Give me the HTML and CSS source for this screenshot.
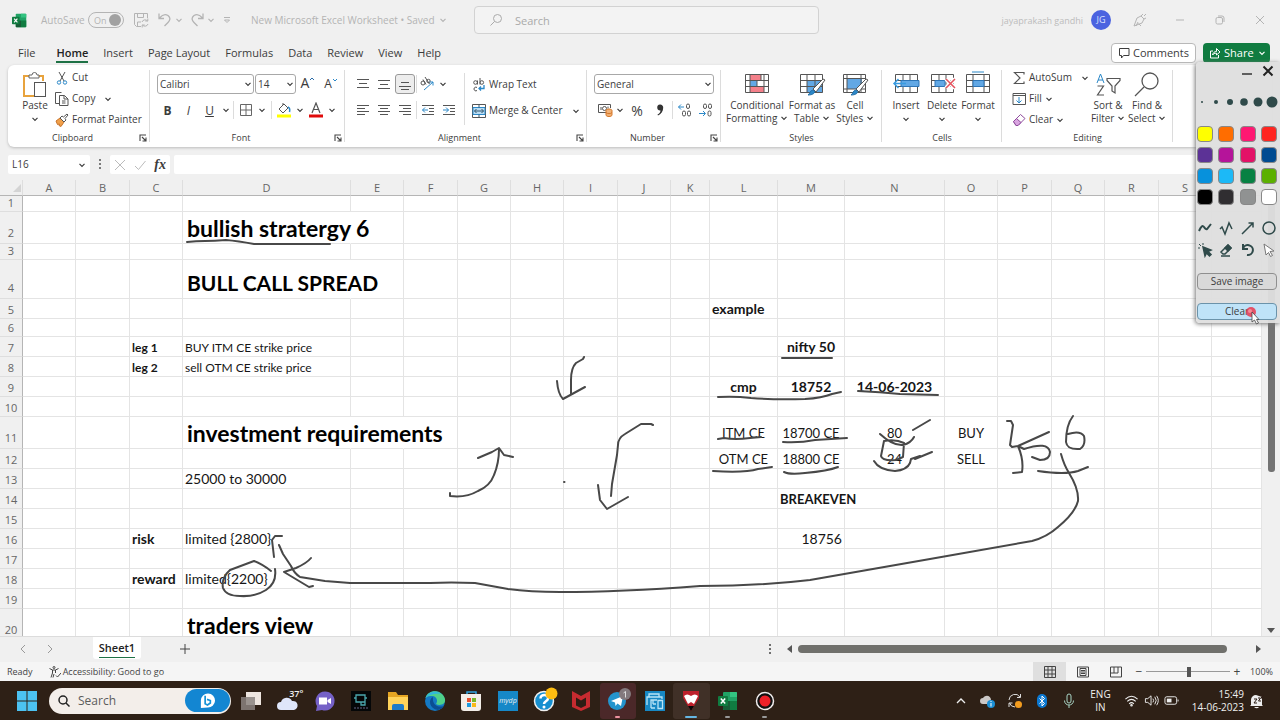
FILE: index.html
```html
<!DOCTYPE html>
<html lang="en">
<head>
<meta charset="utf-8">
<title>New Microsoft Excel Worksheet</title>
<link rel="stylesheet" href="styles.css">
</head>
<body>
<svg class="defs" aria-hidden="true">
  <symbol id="chev" viewBox="0 0 8 8"><path d="M1.5 2.8 4 5.3 6.500 2.800" fill="none" stroke="currentColor" stroke-width="1.2"/></symbol>
  <symbol id="launch" viewBox="0 0 8 8"><path d="M1 7V1h6M3 3l4 4M7 3.500V7H3.500" fill="none" stroke="#444" stroke-width="1.100"/></symbol>
  <symbol id="xl" viewBox="0 0 20 20"><rect x="5" y="1" width="14" height="18" rx="1" fill="#21a366"/><path d="M5 10h7v9H6a1 1 0 0 1-1-1z" fill="#185c37"/><path d="M12 10h7v8a1 1 0 0 1-1 1h-6z" fill="#107c41"/><path d="M12 1h6a1 1 0 0 1 1 1v4h-7z" fill="#33c481"/><rect x="0" y="5" width="10" height="10" rx="1" fill="#107c41"/><path d="m2.800 7.500 4.400 5M7.200 7.500l-4.400 5" stroke="#fff" stroke-width="1.500"/></symbol>
</svg>

<header class="titlebar">
  <div class="title-left">
    <svg class="i15" viewBox="0 0 20 20"><use href="#xl"/></svg>
    <span class="autosave">AutoSave</span>
    <button class="toggle" aria-label="AutoSave on"><span>On</span><i></i></button>
    <button class="ib save" aria-label="Save"><svg class="i16" viewBox="0 0 16 16" fill="none" stroke="currentColor"><path d="M8 14.500H3.500l-2-2v-11h13V6M4.500 1.500v4h6v-4M4.500 14v-4H8M9 10a3.200 3.200 0 0 1 5.500-1M14.800 6.500V9h-2.500M15 12a3.200 3.200 0 0 1-5.500 1M9.200 15.500V13h2.500"/></svg></button>
    <button class="ib undo" aria-label="Undo"><svg class="i16" viewBox="0 0 16 16" fill="none" stroke="currentColor" stroke-width="1.300"><path d="M2 1.500v5h5M2.500 6C5 3 8 1.500 11 3.500c3 2.500 2 5 0 7L7.500 14"/></svg></button>
    <svg class="i8 c1"><use href="#chev"/></svg>
    <button class="ib redo" aria-label="Redo"><svg class="i16" viewBox="0 0 16 16" fill="none" stroke="currentColor" stroke-width="1.300"><path d="M14 1.500v5H9M13.500 6C11 3 8 1.500 5 3.500c-3 2.500-2 5 0 7L8.500 14"/></svg></button>
    <svg class="i8 c1"><use href="#chev"/></svg>
    <svg class="i8 more" viewBox="0 0 8 8" fill="none" stroke="currentColor"><path d="M1 1.500h6M1.500 4 4 6.500 6.500 4z"/></svg>
    <span class="doc">New Microsoft Excel Worksheet • Saved</span>
    <svg class="i8"><use href="#chev"/></svg>
  </div>
  <label class="search"><svg class="i14" viewBox="0 0 14 14" fill="none" stroke="currentColor"><circle cx="8.500" cy="5.500" r="4"/><path d="m5.500 8.500-4 4"/></svg><input type="text" placeholder="Search" aria-label="Search"></label>
  <div class="title-right">
    <span class="user">jayaprakash gandhi</span><span class="avatar">JG</span>
    <button class="win" aria-label="Ink"><svg class="i14" viewBox="0 0 14 14" fill="none" stroke="currentColor"><path d="m1 13 3-8 4-2 3 3-2 4zM5 9l-2 4M8 3l2-2M11 6l2-1M11 3l2-2M5.500 10.500 8 13"/></svg></button>
    <button class="win" aria-label="Minimize"><svg class="i10" viewBox="0 0 10 10" stroke="currentColor"><path d="M1 5h8"/></svg></button>
    <button class="win" aria-label="Restore"><svg class="i10" viewBox="0 0 10 10" fill="none" stroke="currentColor"><rect x="1" y="2.500" width="6.500" height="6.500" rx="1.500"/><path d="M3 1h4a2 2 0 0 1 2 2v4"/></svg></button>
    <button class="win" aria-label="Close"><svg class="i10" viewBox="0 0 10 10" stroke="currentColor"><path d="m1 1 8 8M9 1 1 9"/></svg></button>
  </div>
</header>

<nav class="tabs">
  <button class="file">File</button><button class="on">Home</button><button>Insert</button><button>Page Layout</button><button>Formulas</button><button>Data</button><button>Review</button><button>View</button><button>Help</button>
  <span class="grow"></span>
  <button class="comments"><svg class="i12" viewBox="0 0 12 12" fill="none" stroke="currentColor"><path d="M1.500 1.500h9.500v7H5.500L3.500 11V8.500h-2z"/></svg>Comments</button>
  <button class="share"><svg class="i12" viewBox="0 0 12 12" fill="none" stroke="currentColor"><path d="M4 4H1.500v7h8V8M3.500 8C4 5.500 5.500 4.500 7.500 4.500v-3L11 5 7.500 8V6.200C5.500 6.200 4.500 6.700 3.500 8z"/></svg>Share<svg class="i8"><use href="#chev"/></svg></button>
</nav>

<main class="ribbon">
  <section class="group">
    <div class="body clip">
      <button class="big"><svg class="art" viewBox="0 0 28 27" fill="none"><path d="M9 4H3v20h10M17 4h5v5" stroke="#e8a33d" stroke-width="2"/><path d="M8 6V3h3a2.500 2.500 0 0 1 5 0h2v3z" fill="#fff" stroke="#666"/><rect x="13.500" y="10.500" width="11" height="14" fill="#fff" stroke="#555"/></svg><span>Paste</span><svg class="i8 low"><use href="#chev"/></svg></button>
      <div class="stack">
        <button class="line"><svg class="i14" viewBox="0 0 14 14" fill="none"><path d="m4 1 5 9M10 1l-5 9" stroke="#555"/><circle cx="4" cy="11.500" r="1.700" stroke="#2b88c8"/><circle cx="10" cy="11.500" r="1.700" stroke="#2b88c8"/></svg>Cut</button>
        <button class="line"><svg class="i14" viewBox="0 0 14 14" fill="#fff" stroke="#555"><path d="M4.500 11.500h-4v-11h6M4.500 3.500h5l3.500 3.500v6.500H4.500zM9 3.500V7h4M7 9h3.500M7 11h3.500"/></svg>Copy<svg class="i8 far"><use href="#chev"/></svg></button>
        <button class="line"><svg class="i14" viewBox="0 0 14 14" fill="none"><path d="M1 8l4-3 4 4-3 4.500-2-1 .5-1.500-2 .5z" fill="#f0a04a" stroke="#c8732a"/><path d="m5 5 2-2 1.500 1L12 1l1 1-3 3.500L11 7 9 9z" fill="#fff" stroke="#555"/></svg>Format Painter</button>
      </div>
    </div>
    <footer class="launch">Clipboard<svg class="i8"><use href="#launch"/></svg></footer>
  </section>

  <section class="group">
    <div class="body rows">
      <div class="frow1">
        <span class="sel"><select aria-label="Font"><option>Calibri</option></select><svg class="i8"><use href="#chev"/></svg></span>
        <span class="sel"><select aria-label="Font size"><option>14</option></select><svg class="i8"><use href="#chev"/></svg></span>
        <button class="ib big-a" aria-label="Grow font">A<svg class="i6" viewBox="0 0 6 6" fill="none" stroke="#2b6ca8"><path d="m1 4 2-2 2 2"/></svg></button>
        <button class="ib small-a" aria-label="Shrink font">A<svg class="i6" viewBox="0 0 6 6" fill="none" stroke="#2b88c8"><path d="m1 2 2 2 2-2"/></svg></button>
      </div>
      <div class="frow2">
        <button class="ib"><b>B</b></button><button class="ib"><em>I</em></button><button class="ib"><u>U</u></button><svg class="i8"><use href="#chev"/></svg><hr>
        <button class="ib" aria-label="Borders"><svg class="i14" viewBox="0 0 14 14" fill="none" stroke="#666"><path d="M1.500 1.500h11v11h-11zM7 1.500v11M1.500 7h11"/></svg></button><svg class="i8"><use href="#chev"/></svg><hr>
        <button class="ib" aria-label="Fill colour"><svg class="i16" viewBox="0 0 16 16" fill="none"><path d="m3 7 5-5 4 4-5 5zM7 3V1" stroke="#555"/><path d="M12 5c2 1 2 3 1.500 5" stroke="#2b88c8" stroke-width="1.500"/><path d="M1 12.500h14v3H1z" fill="#ff0"/></svg></button><svg class="i8"><use href="#chev"/></svg>
        <button class="ib" aria-label="Font colour"><svg class="i16" viewBox="0 0 16 16" fill="none"><path d="m4 11 4-10 4 10M5.500 7.500h5" stroke="#555" stroke-width="1.200"/><path d="M1 12.500h14v3H1z" fill="#e00b0b"/></svg></button><svg class="i8"><use href="#chev"/></svg>
      </div>
    </div>
    <footer class="launch">Font<svg class="i8"><use href="#launch"/></svg></footer>
  </section>

  <section class="group">
    <div class="body split">
      <div class="rows">
        <div class="arow">
          <button class="ib" aria-label="Top align"><svg class="i14" viewBox="0 0 14 14" stroke="#555"><path d="M1 2.500h12M3 6.500h8M1 10.500h12"/></svg></button>
          <button class="ib" aria-label="Middle align"><svg class="i14" viewBox="0 0 14 14" stroke="#555"><path d="M1 3.500h12M3 7.500h8M1 11.500h12"/></svg></button>
          <button class="ib pressed" aria-label="Bottom align"><svg class="i14" viewBox="0 0 14 14" stroke="#555"><path d="M3 5.500h8M1 9.500h12M3 12.500h8"/></svg></button><hr>
          <button class="ib" aria-label="Orientation"><svg class="i16" viewBox="0 0 16 16" fill="none"><circle cx="4" cy="7" r="2" stroke="#555"/><path d="m4 3.500 3 5M6 1l4.500 7" stroke="#555"/><circle cx="9.500" cy="5" r="1.700" stroke="#555"/><path d="m5 14 9-8M10.500 6H14v3.500" stroke="#2b88c8"/></svg></button><svg class="i8"><use href="#chev"/></svg>
        </div>
        <div class="arow two">
          <button class="ib" aria-label="Align left"><svg class="i14" viewBox="0 0 14 14" stroke="#555"><path d="M1 2.500h12M1 5.500h8M1 8.500h12M1 11.500h8"/></svg></button>
          <button class="ib" aria-label="Centre"><svg class="i14" viewBox="0 0 14 14" stroke="#555"><path d="M1 2.500h12M3 5.500h8M1 8.500h12M3 11.500h8"/></svg></button>
          <button class="ib" aria-label="Align right"><svg class="i14" viewBox="0 0 14 14" stroke="#555"><path d="M1 2.500h12M5 5.500h8M1 8.500h12M5 11.500h8"/></svg></button><hr>
          <button class="ib" aria-label="Decrease indent"><svg class="i14" viewBox="0 0 14 14" fill="none" stroke="#555"><path d="M1 2.500h12M8 5.500h5M8 8.500h5M1 11.500h12"/><path d="M7 7H1.500M4 4.500 1.500 7 4 9.500" stroke="#2b88c8"/></svg></button>
          <button class="ib" aria-label="Increase indent"><svg class="i14" viewBox="0 0 14 14" fill="none" stroke="#555"><path d="M1 2.500h12M8 5.500h5M8 8.500h5M1 11.500h12"/><path d="M1 7h5.500M4 4.500 6.500 7 4 9.500" stroke="#2b88c8"/></svg></button>
        </div>
      </div>
      <hr class="tall">
      <div class="wrapcol">
        <button class="line"><svg class="i14" viewBox="0 0 14 14" fill="none" stroke="#555"><circle cx="3.500" cy="4.500" r="1.800"/><path d="M5.500 2.500v4M8 0v6.500M5 9.500c-1.500-1-3 0-3 1.500s1.500 2.500 3 1.500"/><circle cx="9.800" cy="4.500" r="1.800"/><path d="M12 7v3.500H7M9 8.500l-2 2 2 2" stroke="#2b88c8" stroke-width="1.300"/></svg>Wrap Text</button>
        <button class="line"><svg class="i14" viewBox="0 0 14 14" fill="none" stroke="#555"><path d="M.500.500h13v13H.500z"/><path d="M1 3.500h12v7H1z" fill="#b9dcf3" stroke="#2b88c8"/><path d="M7 .5v3M7 10.500v3M2.500 7h9M4.500 5l-2 2 2 2M9.500 5l2 2-2 2" stroke="#35566d"/></svg>Merge &amp; Center<svg class="i8 far"><use href="#chev"/></svg></button>
      </div>
    </div>
    <footer class="launch">Alignment<svg class="i8"><use href="#launch"/></svg></footer>
  </section>

  <section class="group">
    <div class="body rows">
      <span class="sel"><select aria-label="Number format"><option>General</option></select><svg class="i8"><use href="#chev"/></svg></span>
      <div class="nrow">
        <button class="ib" aria-label="Accounting"><svg class="i16" viewBox="0 0 16 16" fill="none" stroke="#555"><path d="M9 10.500H1.500v-8h12V6M4 5v3M11 4.500v2"/><circle cx="7.500" cy="6.500" r="2"/><path d="M9 8.500c0-2 6-2 6 0V13c0 2-6 2-6 0z" fill="#f2b176" stroke="#d5782a"/><path d="M9 10.500c1 1.500 5 1.500 6 0" stroke="#d5782a"/></svg></button><svg class="i8"><use href="#chev"/></svg>
        <button class="ib pct">%</button><button class="ib" aria-label="Comma style"><svg class="i14" viewBox="0 0 14 14"><path d="M7 1.500a3 3 0 0 1 3.200 3.300C10.200 8.500 8 11 5 12.500l-.5-1C6.500 10.500 7.500 9 7.500 7.500A3 3 0 1 1 7 1.500z" fill="#333"/></svg></button><hr>
        <button class="ib" aria-label="Increase decimal"><svg class="i14" viewBox="0 0 14 14" fill="none" stroke="#555"><rect x="9.500" y="1" width="3" height="4.500" rx="1.500"/><rect x="5.500" y="8" width="3" height="5" rx="1.500"/><rect x="10.500" y="8" width="3" height="5" rx="1.500"/><path d="M7 4H1.500M4 1.500 1.500 4 4 6.500" stroke="#2b88c8"/></svg></button>
        <button class="ib" aria-label="Decrease decimal"><svg class="i14" viewBox="0 0 14 14" fill="none" stroke="#555"><rect x="5.500" y="1" width="3" height="4.500" rx="1.500"/><rect x="10.500" y="1" width="3" height="4.500" rx="1.500"/><rect x="10" y="8" width="3" height="5" rx="1.500"/><path d="M1 10.500h6M5 8l2.500 2.500L5 13" stroke="#2b88c8"/></svg></button>
      </div>
    </div>
    <footer class="launch">Number<svg class="i8"><use href="#launch"/></svg></footer>
  </section>

  <section class="group">
    <div class="body styles">
      <button class="big"><svg class="art" viewBox="0 0 28 27"><path d="M2.500 2.500h23v18h-23z" fill="#fff"/><path d="M7 2.500h11v6H7zM7 14.500h14v6H7z" fill="#f4808a"/><path d="M7 8.500h7v6H7z" fill="#62a8e5"/><path d="M2.500 2.500h23v18h-23zM2.500 8.500h23M2.500 14.500h23M7 2.500v18M21 2.500v18M18 2.500v6M14 8.500v6" fill="none" stroke="#555"/></svg><span>Conditional<br>Formatting <svg class="i8"><use href="#chev"/></svg></span></button>
      <button class="big"><svg class="art" viewBox="0 0 28 27"><path d="M9 8.500h16v12H9z" fill="#62a8e5"/><path d="M2.500 2.500h22v18h-22zM2.500 8.500h22M2.500 14.500h22M9 2.500v18M17 2.500v18" fill="none" stroke="#555"/><path d="m15 17 10-10 2 1-9 12z" fill="#fff" stroke="#555"/><path d="M10 23c2-1 2-5 5-5 3 1 2 5-5 5z" fill="#2b88c8" stroke="#2470a8"/></svg><span>Format as<br>Table <svg class="i8"><use href="#chev"/></svg></span></button>
      <button class="big"><svg class="art" viewBox="0 0 28 27"><path d="M6 6h15v11H6z" fill="#62a8e5"/><path d="M2.500 2.500h22v18h-22zM2.500 6.500h22M2.500 17h22M6 2.500v18M20 2.500v18" fill="none" stroke="#555"/><path d="m15 17 10-10 2 1-9 12z" fill="#fff" stroke="#555"/><path d="M10 23c2-1 2-5 5-5 3 1 2 5-5 5z" fill="#2b88c8" stroke="#2470a8"/></svg><span>Cell<br>Styles <svg class="i8"><use href="#chev"/></svg></span></button>
    </div>
    <footer>Styles</footer>
  </section>

  <section class="group">
    <div class="body cells">
      <button class="big"><svg class="art" viewBox="0 0 28 27" fill="none"><path d="M3.500 2.500h22v18h-22zM3.500 8.500h22M3.500 14.500h22M11 2.500v18M18 2.500v18" stroke="#555"/><path d="M9 8.500h18v6H9z" fill="#62a8e5" stroke="#2e75b6"/><path d="M14 11.500H2M6.500 7 2 11.500 6.500 16" stroke="#3a9be0" stroke-width="1.500"/></svg><span>Insert</span><svg class="i8 low"><use href="#chev"/></svg></button>
      <button class="big"><svg class="art" viewBox="0 0 28 27" fill="none"><path d="M3.500 2.500h22v18h-22zM3.500 8.500h22M3.500 14.500h22M11 2.500v18M18 2.500v18" stroke="#555"/><path d="M7 8.500h10v6H7z" fill="#62a8e5" stroke="#2e75b6"/><path d="m18 7 9 9M27 7l-9 9" stroke="#fff" stroke-width="4"/><path d="m18 7 9 9M27 7l-9 9" stroke="#e4515c" stroke-width="1.500"/></svg><span>Delete</span><svg class="i8 low"><use href="#chev"/></svg></button>
      <button class="big"><svg class="art" viewBox="0 0 28 27" fill="none"><path d="M2.500 2.500h23v18h-23zM2.500 8.500h23M2.500 14.500h23M9 2.500v18M20 2.500v18" stroke="#555"/><path d="M9 8.500h11v6H9z" fill="#62a8e5" stroke="#2e75b6"/><path d="M8 0h12" stroke="#2b88c8"/></svg><span>Format</span><svg class="i8 low"><use href="#chev"/></svg></button>
    </div>
    <footer>Cells</footer>
  </section>

  <section class="group">
    <div class="body edit">
      <div class="stack">
        <button class="line"><svg class="i14" viewBox="0 0 14 14" fill="none" stroke="#555" stroke-width="1.200"><path d="M12 3.500v-2H2.500L8 7l-5.500 5.500H12v-2"/></svg>AutoSum<svg class="i8 far"><use href="#chev"/></svg></button>
        <button class="line"><svg class="i14" viewBox="0 0 14 14" fill="none" stroke="#555"><path d="M1 1.500h12.500v11H1zM1 3.500h12.500"/><path d="M7 5v6M4.500 8.500 7 11l2.500-2.500" stroke="#2b88c8"/></svg>Fill<svg class="i8"><use href="#chev"/></svg></button>
        <button class="line"><svg class="i14" viewBox="0 0 14 14" fill="none" stroke="#8e4b9c"><path d="m1.500 8.500 7-7 4.500 4-7 7H4z"/><path d="m1.500 8.500 3-3L9 9.500l-3 3H4z" fill="#d9a5e0"/></svg>Clear<svg class="i8"><use href="#chev"/></svg></button>
      </div>
      <button class="big"><svg class="art" viewBox="0 0 28 27" fill="none"><path d="m3 11 3.500-9L10 11M4 8h5" stroke="#2b88c8"/><path d="M3.500 14h6l-6 9h6.500M13 6.500h13v2L21 14v7l-3-2v-5l-5-5.500z" stroke="#555" stroke-width="1.200"/></svg><span>Sort &amp;<br>Filter <svg class="i8"><use href="#chev"/></svg></span></button>
      <button class="big"><svg class="art" viewBox="0 0 28 27" fill="none" stroke="#555" stroke-width="1.300"><circle cx="17" cy="9" r="8"/><path d="M11 15 2 24"/></svg><span>Find &amp;<br>Select <svg class="i8"><use href="#chev"/></svg></span></button>
    </div>
    <footer>Editing</footer>
  </section>
</main>

<div class="formula">
  <label class="namebox"><input type="text" value="L16" aria-label="Name box"><svg class="i8"><use href="#chev"/></svg></label>
  <svg class="dots" viewBox="0 0 4 12" fill="#555"><circle cx="2" cy="2" r="1"/><circle cx="2" cy="6" r="1"/><circle cx="2" cy="10" r="1"/></svg>
  <div class="fx"><svg class="i12" viewBox="0 0 12 12" stroke="#bbb"><path d="m1 1 10 10M11 1 1 11"/></svg><svg class="i12" viewBox="0 0 12 12" fill="none" stroke="#bbb"><path d="m1 7 3.500 3.500L11.500 2"/></svg><em>fx</em></div>
  <input class="finput" type="text" aria-label="Formula bar">
</div>

<div class="sheet">
  <table>
    <colgroup><col class="w23"><col class="w53"><col class="w54"><col class="w53"><col class="w168"><col class="w53"><col class="w54"><col class="w53"><col class="w53"><col class="w54"><col class="w53"><col class="w39"><col class="w68"><col class="w67"><col class="w100"><col class="w53"><col class="w54"><col class="w53"><col class="w54"><col class="w53"><col></colgroup>
    <thead><tr><th class="corner"><svg class="i10" viewBox="0 0 10 10"><path d="M9 1v8H1z" fill="#d4d4d4"/></svg></th><th>A</th><th>B</th><th>C</th><th>D</th><th>E</th><th>F</th><th>G</th><th>H</th><th>I</th><th>J</th><th>K</th><th>L</th><th>M</th><th>N</th><th>O</th><th>P</th><th>Q</th><th>R</th><th>S</th><th></th></tr></thead>
    <tbody>
    <tr class="h16"><th>1<td><td><td><td><td><td><td><td><td><td><td><td><td><td><td><td><td><td><td><td>
    <tr class="h32"><th>2<td><td><td><td class="h spill">bullish stratergy 6<td><td><td><td><td><td><td><td><td><td><td><td><td><td><td><td>
    <tr class="h16"><th>3<td><td><td><td><td><td><td><td><td><td><td><td><td><td><td><td><td><td><td><td>
    <tr class="h39"><th>4<td><td><td><td class="h caps spill">BULL CALL SPREAD<td><td><td><td><td><td><td><td><td><td><td><td><td><td><td><td>
    <tr class="h20"><th>5<td><td><td><td><td><td><td><td><td><td><td><td class="b">example<td><td><td><td><td><td><td><td>
    <tr class="h18"><th>6<td><td><td><td><td><td><td><td><td><td><td><td><td><td><td><td><td><td><td><td>
    <tr class="h20"><th>7<td><td><td class="b sm">leg 1<td class="sm">BUY ITM CE strike price<td><td><td><td><td><td><td><td><td class="b c">nifty 50<td><td><td><td><td><td><td>
    <tr class="h20"><th>8<td><td><td class="b sm">leg 2<td class="sm">sell OTM CE strike price<td><td><td><td><td><td><td><td><td><td><td><td><td><td><td><td>
    <tr class="h20"><th>9<td><td><td><td><td><td><td><td><td><td><td><td class="b c">cmp<td class="b c">18752<td class="b c">14-06-2023<td><td><td><td><td><td>
    <tr class="h20"><th>10<td><td><td><td><td><td><td><td><td><td><td><td><td><td><td><td><td><td><td><td>
    <tr class="h32"><th>11<td><td><td><td class="h spill">investment requirements<td class="spill"><td><td><td><td><td><td><td class="c m">ITM CE<td class="c m">18700 CE<td class="c m">80<td class="c m">BUY<td><td><td><td><td>
    <tr class="h20"><th>12<td><td><td><td><td><td><td><td><td><td><td><td class="c t">OTM CE<td class="c t">18800 CE<td class="c t">24<td class="c t">SELL<td><td><td><td><td>
    <tr class="h20"><th>13<td><td><td><td>25000 to 30000<td><td><td><td><td><td><td><td><td><td><td><td><td><td><td><td>
    <tr class="h20"><th>14<td><td><td><td><td><td><td><td><td><td><td><td><td class="b t spill">BREAKEVEN<td><td><td><td><td><td><td>
    <tr class="h20"><th>15<td><td><td><td><td><td><td><td><td><td><td><td><td><td><td><td><td><td><td><td>
    <tr class="h20"><th>16<td><td><td class="b">risk<td>limited {2800}<td><td><td><td><td><td><td><td><td class="r">18756<td><td><td><td><td><td><td>
    <tr class="h20"><th>17<td><td><td><td><td><td><td><td><td><td><td><td><td><td><td><td><td><td><td><td>
    <tr class="h20"><th>18<td><td><td class="b">reward<td>limited{2200}<td><td><td><td><td><td><td><td><td><td><td><td><td><td><td><td>
    <tr class="h20"><th>19<td><td><td><td><td><td><td><td><td><td><td><td><td><td><td><td><td><td><td><td>
    <tr class="h32"><th>20<td><td><td><td class="h">traders view<td><td><td><td><td><td><td><td><td><td><td><td><td><td><td><td>
    </tbody>
  </table>
  <div class="vscroll"><i></i><svg class="i8" viewBox="0 0 8 8"><path d="M0 2h8L4 7z" fill="#555"/></svg></div>
</div>

<div class="sheetbar">
  <svg class="i10 nav" viewBox="0 0 10 10" fill="none" stroke="#999"><path d="M7 1 3 5l4 4"/></svg>
  <svg class="i10 nav" viewBox="0 0 10 10" fill="none" stroke="#999"><path d="m3 1 4 4-4 4"/></svg>
  <button class="sheettab"><span>Sheet1</span></button>
  <button class="ib plus" aria-label="New sheet"><svg class="i10" viewBox="0 0 10 10" stroke="#444"><path d="M5 0v10M0 5h10"/></svg></button>
  <span class="grow"></span>
  <div class="hscroll"><svg class="dots" viewBox="0 0 4 12" fill="#444"><circle cx="2" cy="2" r="1"/><circle cx="2" cy="6" r="1"/><circle cx="2" cy="10" r="1"/></svg><svg class="i8" viewBox="0 0 8 8"><path d="M6 0v8L1 4z" fill="#555"/></svg><i></i><svg class="i8" viewBox="0 0 8 8"><path d="M2 0v8l5-4z" fill="#555"/></svg></div>
</div>

<div class="status">
  <span>Ready</span>
  <svg class="i12 acc" viewBox="0 0 12 12" fill="none" stroke="#444"><circle cx="5" cy="1.500" r="1"/><path d="M.5 2.500 3.500 4v3L2 11.500M9.500 2.500 6.500 4v3M3.500 4h3M5 8l-1 3.500M7 9.500l1.500 1.500L12 7"/></svg>
  <span>Accessibility: Good to go</span><span class="grow"></span>
  <button class="view on" aria-label="Normal"><svg class="i12" viewBox="0 0 12 12" fill="none" stroke="#444"><path d="M.5.5h11v11H.500zM.5 4h11M.5 8h11M4 .5v11M8 .5v11"/></svg></button>
  <button class="view" aria-label="Page layout"><svg class="i12" viewBox="0 0 12 12" fill="none" stroke="#444"><path d="M.5 1h11v10H.500zM3 2.500h6v7H3zM4 4.500h4M4 6h4M4 7.500h4"/></svg></button>
  <button class="view" aria-label="Page break"><svg class="i12" viewBox="0 0 12 12" fill="none" stroke="#444"><path d="M.5 1h11v10H.500zM4 1v6M8 1v6M.5 7h7.500"/></svg></button>
  <span class="zm">−</span><input class="zoom" type="range" aria-label="Zoom" min="10" max="190" value="102"><span class="zm">+</span><span class="pc">100%</span>
</div>

<footer class="taskbar">
  <button class="ib start" aria-label="Start"><svg viewBox="0 0 20 20" fill="#4cc2f1"><path d="M0 0h9.500v9.500H0zM10.500 0H20v9.500h-9.500zM0 10.500h9.500V20H0zM10.500 10.500H20V20h-9.500z"/></svg></button>
  <label class="tsearch"><svg class="i12" viewBox="0 0 12 12" fill="none" stroke="#222" stroke-width="1.500"><circle cx="5" cy="5" r="4"/><path d="m8 8 3.500 3.500"/></svg><input type="text" placeholder="Search" aria-label="Taskbar search"><span class="bing"><svg viewBox="0 0 18 18"><path d="M2 17V9a7.500 7.500 0 1 1 7 7.500z" fill="#fff"/><path d="M6.500 4v8.500l2.500 1.200 3-2V9L8.500 7.800" fill="none" stroke="#1593d8" stroke-width="1.800"/></svg></span></label>
  <div class="apps">
    <span><svg viewBox="0 0 24 24"><path d="M7 3h15v13H7z" fill="#eee6e0"/><path d="M2 8h14v13H2z" fill="#8b8480" opacity=".85"/></svg></span>
    <span class="weather"><svg viewBox="0 0 24 24"><path d="M5 21a4 4 0 0 1 0-8 6 6 0 0 1 11-1 4.500 4.500 0 0 1 2 9z" fill="#dfe6fa"/></svg><small>37°</small></span>
    <span><svg viewBox="0 0 24 24"><path d="M12 2.500a9.500 9.500 0 1 1-3 18.500L3 22l1-5A9.500 9.500 0 0 1 12 2.500z" fill="#7561c7"/><path d="M6 8.500h8v7H6zM14.500 11l3.500-2v6l-3.500-2z" fill="#fff"/></svg></span>
    <span><svg viewBox="0 0 24 24"><path d="M2 2h20v20H2z" fill="#050708"/><path d="M7 6h9v7H7zM12 13v3h4v-3M5 9h2M16 9h2" fill="none" stroke="#4ba7ad" stroke-width="1.300"/><path d="M5 19h14" stroke="#668" stroke-dasharray="2 1"/></svg></span>
    <span><svg viewBox="0 0 24 24"><path d="M2 3h8l2 3h10v15H2z" fill="#e5a523"/><path d="M2 8h20v13H2z" fill="#ffd35a"/><path d="M6 21v-4q0-2 2-2h8q2 0 2 2v4z" fill="#1d7bc9"/></svg></span>
    <span><svg viewBox="0 0 24 24"><circle cx="12" cy="12" r="10" fill="#1479c4"/><path d="M2.500 9C5 0 19 0 22 10c1 6-6 7-9 5 2-3 1-7-3-8-3 0-6 0-7.500 2z" fill="#4fd08a"/><path d="M2.500 9C5 2 14 1 18 5 11 4 6 6 2.500 9z" fill="#31b7dd"/><path d="M10 8c-5 2-4 12 5 13 3-1 5-2 6-4-6 2-12-1-11-9z" fill="#0b4e93"/></svg></span>
    <span><svg viewBox="0 0 24 24"><path d="M8 6V3h9v3" fill="none" stroke="#31a3df" stroke-width="1.500"/><path d="M2 5h20v14q0 3-3 3H5q-3 0-3-3z" fill="#f3eee8"/><path d="M8 9h4v4H8z" fill="#e8502f"/><path d="M13 9h4v4h-4z" fill="#77b82b"/><path d="M8 14h4v4H8z" fill="#1d9be0"/><path d="M13 14h4v4h-4z" fill="#f9b917"/></svg></span>
    <span class="mydp"><b>my<i>dp</i></b></span>
    <span><svg viewBox="0 0 24 24"><circle cx="11" cy="12" r="9.500" fill="#168fd0" stroke="#f0f0f0" stroke-width="1.500"/><path d="M7.500 9.500c0-5 8-4.500 7.500 0-.5 3-4 2.500-4 5.500" fill="none" stroke="#fff" stroke-width="2.500"/><circle cx="11" cy="18" r="1.500" fill="#fff"/><circle cx="18.500" cy="4.500" r="6" fill="#fdbc11"/></svg></span>
    <span><svg viewBox="0 0 24 24"><path d="m3 2 9 5 9-5v16l-9 4-9-4z" fill="#c62b30"/><path d="m7 8.500 5 3 5-3v8L12 19l-5-2.500z" fill="#2c1d14"/></svg></span>
    <span class="run tg"><svg viewBox="0 0 24 24"><circle cx="11" cy="12" r="9" fill="#2494cd"/><path d="m5 12 12-5-2 10-3.500-2.500L9.500 17 9 13.500z" fill="#fff"/><circle cx="19" cy="5" r="6" fill="#83797d"/><path d="m17.500 4 2-1.500v6" fill="none" stroke="#ddd"/></svg></span>
    <span><svg viewBox="0 0 24 24"><path d="M2 2h20v20H2z" fill="#1788c3"/><path d="M6 8V5h10v3M4 16V8h15v2M8 19V11h6M8 19h4M15 11.500h4.500v8H15zM10 15h3M10 11v4" fill="none" stroke="#b8e3f6" stroke-width="1.300"/></svg></span>
    <span class="run act"><svg viewBox="0 0 24 24"><path d="M4 2h16v7l-8 13L4 9z" fill="#bd202b"/><path d="M5 7q3-3 7 0 4-3 7 0l-4 8-3-2-3 2z" fill="#fff"/><path d="m9 17 3 5 3-5z" fill="#080808"/></svg></span>
    <span class="run"><svg viewBox="0 0 20 20" class="i20"><use href="#xl"/></svg></span>
    <span class="run"><svg viewBox="0 0 24 24"><circle cx="12" cy="12" r="8.500" fill="#111" stroke="#f2eeee" stroke-width="1.500"/><circle cx="12" cy="12" r="5.500" fill="#ed2028"/></svg></span>
  </div>
  <span class="grow"></span>
  <div class="tray">
    <svg viewBox="0 0 16 16" fill="none" stroke="#eee" stroke-width="1.300"><path d="m4 10 4-4 4 4"/></svg>
    <svg viewBox="0 0 16 16"><path d="M3 11a3 3 0 0 1 0-6c3-4 8-2 8 2l1 4z" fill="#cbc8c7"/><circle cx="11" cy="11" r="4" fill="#1b8fd5"/><path d="M11 10v3.500M11 8v1" stroke="#fff"/></svg>
    <svg viewBox="0 0 16 16" fill="none" stroke="#ddd"><path d="M2 7a6 6 0 0 1 11-3M13.500 1v3.500H10M8 14a6 6 0 0 1-5.500-4M2 14v-4h3.500"/><circle cx="11.500" cy="11.500" r="3.500" fill="#f39c1f" stroke="none"/></svg>
    <svg viewBox="0 0 16 16"><rect x="3" y="1" width="10" height="14" rx="5" fill="#0b78d1"/><path d="m5.500 5.500 5 5L8 13V3l2.500 2.500-5 5" fill="none" stroke="#fff"/></svg>
    <svg viewBox="0 0 16 16" fill="none" stroke="#a9d5c5"><rect x="6" y="1" width="4" height="9" rx="2"/><path d="M3.500 7.500c0 6 9 6 9 0M8 12v3"/></svg>
  </div>
  <span class="lang">ENG<br>IN</span>
  <div class="tray2">
    <svg viewBox="0 0 16 16" fill="none" stroke="#eee" stroke-width="1.200"><path d="M1.500 6.500q6.500-6 13 0M3.500 9q4.500-4.500 9 0M5.500 11.500q2.500-2.500 5 0"/><circle cx="8" cy="13" r=".8"/></svg>
    <svg viewBox="0 0 16 16" fill="none" stroke="#eee"><path d="M1.500 6H4l3.500-3v10L4 10H1.500zM9.500 6q1.500 2 0 4M11.500 4q3 4 0 8M13.500 3q3.500 5 0 10"/></svg>
    <svg viewBox="0 0 16 16" fill="none" stroke="#eee"><rect x="1" y="4" width="12.500" height="8" rx="2"/><path d="M15 7v2"/><path d="M3 6h5v4H3z" fill="#eee" stroke="none"/></svg>
  </div>
  <span class="clock">15:49<br>14-06-2023</span>
  <svg class="bell" viewBox="0 0 16 16"><path d="M2 12V7a5 5 0 0 1 5-5l6 2v8l1 1H1zM5 14h5q-2 2.500-5 0z" fill="#eee"/><path d="M5 6h3L5 10h3M9 5h2.500L9.500 8H12M12 2h3l-3 3h3" fill="none" stroke="#2c1d14"/></svg>
</footer>

<svg class="ink" viewBox="0 0 1280 720" aria-hidden="true">
  <path d="M187 242Q196 241 205 241T226 240Q238 241 254 244H330M782 358H832M718 397Q735 396 751 398 775 400 805 399 822 398 832 394L841 392M858 391Q880 392 900 394L938 395"/>
  <path d="M718 439 724 438Q735 440 750 438L761 437M783 442Q800 443 815 440L847 438M913 430 930 420M880 434Q893 446 903 445 911 443 914 437M884 441 881 456Q882 461 896 460L903 457 904 443Q896 439 884 441M874 461Q879 470 895 471 907 470 910 463L911 459 920 456 915 459 932 452M713 471Q745 473 758 469L772 467M784 472Q790 475 805 473 828 471 838 467"/>
  <path d="M1007 421H1011L1013 425 1010 445 1012 447 1018 446 1049 432M1018 446Q1024 460 1022 472L1013 473M1018 446 1024 449Q1048 441 1050 452 1050 460 1040 460L1032 457M1073 416Q1066 425 1066 442 1067 450 1080 449 1086 445 1084 436 1080 430 1068 434M1038 471Q1065 475 1078 471L1088 467"/>
  <path d="M1061 454Q1064 465 1069 473 1079 489 1078 501 1075 513 1058 527 1047 537 1032 541L930 559 810 580Q760 586 700 586 620 592 560 592 530 592 508 589L475 583Q450 582 430 583L350 583 325 581 300 577Q294 573 291 566L283 554 279 545M311 558Q307 563 296 568L284 572 299 581 309 587 313 586M274 557 272 540 275 536H282M271 571Q262 564 254 561L230 570Q221 578 223 588 226 596 240 596 255 597 266 590 277 583 275 569"/>
  <path d="M450 493V496Q466 498 478 491 490 486 494 475 499 463 499 449M478 458 492 452 499 448 504 455 513 457M584 357 583 359 576 363Q571 368 571 380V394M557 381Q558 394 563 399L585 387M653 425 651 424H641L625 434Q618 438 618 445L617 455 612 484 611 496M598 485 600 500 607 509 628 497M564 482h.5"/>
</svg>

<aside class="palette">
  <div class="pwin"><button class="ib" aria-label="Minimize palette"><svg class="i12" viewBox="0 0 12 12" stroke="#333" stroke-width="1.500"><path d="M1 9h10"/></svg></button><button class="ib" aria-label="Close palette"><svg class="i12" viewBox="0 0 12 12" stroke="#222" stroke-width="2"><path d="m1.500 1.500 9 9M10.500 1.500l-9 9"/></svg></button></div>
  <svg class="sizes" viewBox="0 0 84 12" fill="#2f4a4a"><circle cx="6" cy="6" r="1"/><circle cx="20" cy="6" r="2"/><circle cx="34" cy="6" r="3"/><circle cx="48" cy="6" r="3.800"/><circle cx="62" cy="6" r="4.500"/><circle cx="76" cy="6" r="5.500"/></svg>
  <div class="swatches"><button class="s1" aria-label="Yellow"></button><button class="s2" aria-label="Orange"></button><button class="s3" aria-label="Pink"></button><button class="s4" aria-label="Red"></button><button class="s5" aria-label="Violet"></button><button class="s6" aria-label="Magenta"></button><button class="s7" aria-label="Crimson"></button><button class="s8" aria-label="Navy"></button><button class="s9" aria-label="Blue"></button><button class="s10" aria-label="Sky"></button><button class="s11" aria-label="Green"></button><button class="s12" aria-label="Lime"></button><button class="s13" aria-label="Black"></button><button class="s14" aria-label="Charcoal"></button><button class="s15" aria-label="Grey"></button><button class="s16" aria-label="White"></button></div>
  <div class="tools">
    <svg viewBox="0 0 16 16"><path d="M2 11q3-7 5-4t3 2l4-5" stroke-width="2"/></svg>
    <svg viewBox="0 0 16 16"><path d="m2 9 2-2 3 7 4-11 3 6"/></svg>
    <svg viewBox="0 0 16 16"><path d="M2 14 13 3M8.500 3H13v4.500"/></svg>
    <svg viewBox="0 0 16 16"><circle cx="8" cy="8" r="6"/></svg>
    <svg viewBox="0 0 16 16"><path d="m6 5 8 3-3 1.500 3 3-1.500 1.500-3-3L8 14z" fill="#2f4a4a"/><path d="m2 2 2 2M1 6h2M6 1v2" stroke-width="1"/></svg>
    <svg viewBox="0 0 16 16"><path d="m4 9 6-6 3 3-6 6H5L3 10zM3 14h9"/><path d="m7 6 3-3 3 3-3 3z" fill="#2f4a4a"/></svg>
    <svg viewBox="0 0 16 16"><path d="M3 7a5 5 0 1 1 4 6M3 2v5h5" stroke-width="2"/></svg>
    <svg viewBox="0 0 16 16"><path d="m3 2 10 7-4 .5 2.500 4L9.500 14.500 7.500 10.500 5 13z" fill="#fff" stroke="#777" stroke-width="1"/></svg>
  </div>
  <button class="pbtn">Save image</button>
  <button class="pbtn hot">Clear</button>
  <svg class="cursor" viewBox="0 0 16 20"><circle cx="6" cy="6" r="5" fill="#e9384f" opacity=".85"/><circle cx="5" cy="5" r="2" fill="#f58b95"/><path d="M7 6v10l2.500-2 2 4 2-1-2-3.500H14z" fill="#fff" stroke="#444" stroke-width=".8"/></svg>
</aside>
</body>
</html>
```

FILE: styles.css
```css
* { box-sizing: border-box; }
body {
  margin: 0;
  height: 100vh;
  display: flex;
  flex-direction: column;
  position: relative;
  overflow: hidden;
  background: #f0f0f0;
  color: #3c3c3c;
  font: 11px/13px "Open Sans", "Noto Sans", sans-serif;
}
button, input, select { font: inherit; color: inherit; margin: 0; padding: 0; border: 0; background: none; }
input { min-width: 0; outline: 0; }
svg { flex: none; display: block; }
hr { width: 1px; height: 18px; margin: 0; border: 0; background: #dcdcdc; }
.defs { position: absolute; width: 0; height: 0; }
.grow { flex: 1; }
.i6 { width: 6px; height: 6px; }
.i8 { width: 8px; height: 8px; }
.i10 { width: 10px; height: 10px; }
.i12 { width: 12px; height: 12px; }
.i14 { width: 14px; height: 14px; }
.i15 { width: 15px; height: 15px; }
.i16 { width: 16px; height: 16px; }
.ib { display: flex; align-items: center; justify-content: center; }

/* Title bar */
.titlebar { flex: none; height: 40px; display: grid; grid-template-columns: 474fr 345fr 461fr; align-items: center; color: #b4b4b4; }
.title-left { display: flex; align-items: center; padding-left: 12px; white-space: nowrap; font-size: 10px; }
.autosave { margin-left: 14px; width: 47px; }
.toggle { width: 36px; height: 16px; border: 1px solid #b4b4b4; border-radius: 8px; display: flex; align-items: center; justify-content: space-between; padding: 0 2px 0 5px; font-size: 9px; }
.toggle i { width: 12px; height: 12px; border-radius: 6px; background: #a2a2a2; }
.save { margin-left: 9px; }
.undo { margin-left: 8px; }
.redo { margin-left: 6px; }
.c1 { margin-left: 2px; }
.more { margin-left: 8px; }
.doc { margin: 0 4px 0 20px; }
.search { display: flex; align-items: center; gap: 12px; height: 28px; padding-left: 14px; border: 1px solid #d2d2d2; border-radius: 4px; background: #f3f3f3; color: #aaa; }
.search input::placeholder { color: #aaa; opacity: 1; }
.title-right { display: flex; align-items: center; justify-content: flex-end; font-size: 9px; }
.user { margin-right: 8px; color: #bcbcbc; }
.avatar { width: 20px; height: 20px; margin-right: 9px; border-radius: 50%; background: #4b63e0; color: #dfe4ff; text-align: center; line-height: 20px; }
.win { width: 40px; height: 24px; display: flex; align-items: center; justify-content: center; }

/* Ribbon tabs */
.tabs { flex: none; height: 25px; display: flex; align-items: center; gap: 15px; padding: 0 10px 0 18px; white-space: nowrap; }
.tabs > button { height: 20px; }
.tabs .file { margin-right: 6px; }
.tabs .on { font-weight: 600; color: #222; border-bottom: 2px solid #1e7145; padding-top: 2px; }
.tabs > .comments { display: flex; align-items: center; gap: 3px; padding: 0 6px; border: 1px solid #b8b8b8; border-radius: 4px; background: #fff; margin-right: -8px; }
.tabs > .share { display: flex; align-items: center; gap: 3px; width: 67px; padding: 0 4px 0 6px; border-radius: 4px; background: #107c41; color: #fff; }
.share .i8 { margin-left: auto; }

/* Ribbon */
.ribbon { flex: none; height: 82px; display: grid; grid-template-columns: 142px 195px 242px 134px 161px 120px 171px; margin: 0 8px; border-radius: 6px; background: #fff; box-shadow: 0 1px 3px #bbb; white-space: nowrap; overflow: hidden; }
.group { display: flex; flex-direction: column; position: relative; }
.group::after { content: ""; position: absolute; top: 5px; bottom: 5px; right: 0; width: 1px; background: #dcdcdc; }
.group footer { height: 16px; display: flex; justify-content: center; position: relative; font-size: 9px; }
.group .launch { padding-right: 13px; }
.group footer .i8 { position: absolute; right: 3px; top: 3px; }
.body { flex: 1; }
.rows { display: flex; flex-direction: column; gap: 6px; padding: 9px 7px 0; }
.clip { display: flex; padding: 0 0 0 13px; }
.stack { display: flex; flex-direction: column; padding-top: 2px; }
.clip .stack { padding-left: 6px; }
.line { height: 21px; display: flex; align-items: center; gap: 3px; font-size: 10px; }
.line .far { margin-left: 6px; }
.big { display: flex; flex-direction: column; align-items: center; padding-top: 7px; font-size: 10px; text-align: center; }
.clip .big { width: 28px; }
.big span .i8 { display: inline-block; }
.art { width: 28px; height: 27px; overflow: visible; }
.low { margin-top: 3px; }
.sel { display: grid; align-items: center; height: 20px; border: 1px solid #a8a8a8; border-radius: 3px; }
.sel > * { grid-area: 1 / 1; }
.sel select { width: 100%; appearance: none; font-size: 10px; padding-left: 2px; outline: 0; }
.sel svg { justify-self: end; margin-right: 1px; pointer-events: none; }
.frow1 { display: grid; grid-template-columns: 97px 41px 22px 22px; column-gap: 1px; height: 20px; }
.frow2, .arow, .nrow { display: grid; align-items: center; justify-items: center; height: 20px; }
.frow2 { grid-template-columns: 21px 21px 21px 11px 5px 20px 12px 6px 20px 12px 20px 12px; font-size: 12px; }
.big-a { font-size: 14px; align-items: flex-start; padding-top: 2px; }
.small-a { font-size: 12px; align-items: flex-start; padding-top: 3px; }
.split { display: flex; }
.split .rows { padding-right: 0; width: 119px; }
.arow { grid-template-columns: 21px 21px 21px 2px 20px 11px; }
.two { grid-template-columns: 21px 21px 21px 2px 21px 22px; }
.pressed { width: 20px; height: 20px; border: 1px solid #999; border-radius: 3px; background: #ededed; }
.tall { height: 52px; margin-top: 8px; }
.wrapcol { display: flex; flex-direction: column; gap: 5px; padding: 9px 0 0 7px; }
.nrow { grid-template-columns: 22px 8px 26px 20px 4px 20px 22px; }
.pct { font-size: 14px; }
.styles { display: grid; grid-template-columns: 66px 44px 42px; padding-left: 3px; }
.cells { display: grid; grid-template-columns: 36px 36px 36px; padding-left: 6px; }
.edit { display: grid; grid-template-columns: 75px 42px 36px; padding-left: 10px; }

/* Formula bar */
.formula { flex: none; height: 33px; display: flex; align-items: flex-start; padding: 8px 8px 0; }
.namebox, .fx, .finput { height: 19px; background: #fff; border-radius: 2px; }
.namebox { width: 82px; display: flex; align-items: center; padding: 0 4px; }
.namebox input { flex: 1; font-size: 10px; }
.dots { width: 4px; height: 12px; margin: 3px 8px; }
.fx { width: 60px; margin-right: 4px; display: flex; align-items: center; justify-content: space-around; }
.fx em { font: italic 700 14px/16px "Liberation Serif", serif; }
.finput { flex: 1; }

/* Worksheet */
.sheet { flex: 1; min-height: 0; display: grid; grid-template-columns: minmax(0, 1fr) 18px; overflow: hidden; }
.sheet table { width: 100%; align-self: start; table-layout: fixed; border-collapse: separate; border-spacing: 0; background: #fff; font: 14px/18px Lato, sans-serif; color: #161616; white-space: nowrap; }
.sheet th { padding: 0; background: #f0f0f0; color: #666; font: 11px/14px "Open Sans", sans-serif; }
.sheet thead th { height: 16px; border-right: 1px solid #dedede; border-bottom: 1px solid #b5b5b5; }
.corner svg { margin-left: auto; }
.sheet tbody th { vertical-align: bottom; padding-bottom: 1px; border-right: 1px solid #b5b5b5; border-bottom: 1px solid #dedede; }
.sheet .h32 th, .sheet .h39 th { padding-bottom: 3px; }
.sheet td { padding: 0 2px; vertical-align: bottom; border-right: 1px solid #e4e4e4; border-bottom: 1px solid #e4e4e4; }
.sheet .b { font-weight: 700; }
.sheet .c { text-align: center; padding: 0; }
.sheet .r { text-align: right; }
.sheet .m { vertical-align: middle; font-size: 13px; }
.sheet .t { font-size: 13px; }
.sheet .sm { font-size: 12px; line-height: 16px; }
.sheet .h { font-size: 23px; line-height: 30px; font-weight: 700; color: #000; padding-left: 4px; }
.sheet .caps { font-size: 21px; }
.sheet .spill { border-right-color: transparent; }
.h16 > * { height: 16px; line-height: 14px; }
.h18 > * { height: 18px; line-height: 16px; }
.h20 > * { height: 20px; }
.h32 > * { height: 32px; }
.h39 > * { height: 39px; }
.w23 { width: 23px; } .w39 { width: 39px; } .w53 { width: 53px; } .w54 { width: 54px; }
.w67 { width: 67px; } .w68 { width: 68px; } .w100 { width: 100px; } .w168 { width: 168px; }
.vscroll { display: flex; flex-direction: column; align-items: center; justify-content: space-between; padding: 20px 0 2px; min-height: 0; height: 100%; max-height: 456px; }
.vscroll i { width: 7px; height: 272px; border-radius: 3px; background: #737373; }

.sheetbar { flex: none; height: 26px; display: flex; align-items: flex-start; border-top: 1px solid #dcdcdc; }
.nav { margin: 7px 0 0 18px; }
.nav + .nav { margin: 7px 38px 0 17px; }
.sheettab { height: 22px; width: 48px; background: #fff; border-radius: 0 0 3px 3px; font-weight: 600; color: #222; }
.sheettab span { display: inline-block; padding: 2px 0 3px; border-bottom: 1px solid #1e7145; }
.plus { margin: 7px 0 0 39px; }
.hscroll { width: 41%; height: 24px; display: flex; align-items: center; }
.hscroll .dots { margin: 0 14px 0 13px; }
.hscroll i { flex: 1; height: 8px; border-radius: 4px; margin: 0 27px 0 4px; background: #70706c; }
.hscroll .i8:last-child { margin-right: 18px; }

.status { flex: none; height: 19px; display: flex; align-items: center; padding: 0 7px; background: #f5f5f5; font-size: 9px; color: #444; }
.acc { margin: 0 2px 0 16px; }
.view { width: 33px; height: 19px; display: flex; align-items: center; justify-content: center; }
.view.on { background: #dfdfdf; }
.zm { width: 14px; text-align: center; font-size: 12px; }
.zoom { appearance: none; width: 84px; height: 12px; background: linear-gradient(#999, #999) center / 100% 1px no-repeat; }
.zoom::-webkit-slider-thumb { appearance: none; width: 4px; height: 10px; background: #555; }
.pc { width: 29px; text-align: right; }

/* Taskbar */
.taskbar { flex: none; height: 39px; display: flex; align-items: center; background: #2e2016; color: #f0f0f0; white-space: nowrap; }
.start { margin: 0 12px 0 17px; }
.start svg { width: 20px; height: 20px; }
.tsearch { width: 182px; height: 26px; display: flex; align-items: center; gap: 8px; padding: 0 1px 0 9px; border-radius: 13px; background: #f3eeea; color: #555; }
.tsearch input { flex: 1; font-size: 12px; }
.tsearch input::placeholder { color: #5c5c5c; opacity: 1; }
.bing { width: 45px; height: 23px; border-radius: 12px; background: #1386d2; display: flex; align-items: center; justify-content: center; }
.bing svg { width: 17px; height: 17px; }
.apps { width: 550px; margin-left: 2px; display: grid; grid-template-columns: repeat(15, 1fr); }
.apps span { height: 36px; display: flex; align-items: center; justify-content: center; position: relative; }
.apps svg { width: 24px; height: 24px; overflow: visible; }
.apps .i20 { width: 20px; height: 20px; }
.weather small { position: absolute; top: 5px; right: 3px; font-size: 9px; line-height: 12px; font-weight: 600; }
.mydp b { width: 20px; height: 20px; background: #1688c8; font-size: 7px; line-height: 20px; text-align: center; font-style: italic; font-weight: 400; }
.run::after { content: ""; position: absolute; bottom: 1px; width: 5px; height: 2px; border-radius: 1px; background: #999; }
.tg { background: #4b2829; border-radius: 3px; }
.tg::after { background: #ee92a0; }
.act { background: #403027; border-radius: 3px; }
.act::after { width: 12px; background: #65b7e4; }
.tray, .tray2 { display: flex; }
.tray { gap: 11px; }
.tray svg, .bell { width: 16px; height: 16px; }
.lang { width: 47px; text-align: center; font-size: 10px; }
.tray2 { gap: 5px; }
.tray2 svg { width: 15px; height: 15px; }
.clock { width: 65px; text-align: right; font-size: 10px; }
.bell { margin: 0 15px 0 5px; }

/* Screen pen strokes and its palette */
.ink { position: absolute; left: 0; top: 0; width: 1280px; height: 720px; pointer-events: none; fill: none; stroke: #484848; stroke-width: 2; stroke-linecap: round; stroke-linejoin: round; }
.palette { position: absolute; top: 62px; right: 0; width: 84px; height: 261px; background: #dfdfdff5; box-shadow: -1px 1px 4px #777; border-radius: 4px 0 0 4px; }
.pwin { display: flex; justify-content: flex-end; gap: 9px; padding: 3px 6px 19px; }
.sizes { width: 84px; height: 12px; }
.swatches, .tools { display: grid; grid-template-columns: repeat(4, 16px); justify-content: space-between; padding: 0 3px 0 1px; }
.swatches { row-gap: 5px; margin-top: 18px; }
.swatches button { height: 16px; border: 1px solid #888; border-radius: 4px; }
.s1 { background: #ff0; } .s2 { background: #ff6d00; } .s3 { background: #ff1872; } .s4 { background: #ff2520; }
.s5 { background: #5c3296; } .s6 { background: #b5149a; } .s7 { background: #e31267; } .s8 { background: #004b91; }
.s9 { background: #0791dc; } .s10 { background: #1cb9f7; } .s11 { background: #078143; } .s12 { background: #5bb000; }
.s13 { background: #000; } .s14 { background: #302e31; } .s15 { background: #909292; } .s16 { background: #fff; }
.tools { row-gap: 6px; margin-top: 15px; }
.tools svg { width: 16px; height: 16px; fill: none; stroke: #2f4a4a; stroke-width: 1.5px; }
.pbtn { display: block; width: 80px; height: 17px; margin: 15px 0 0 1px; border: 1px solid #8f8f8f; border-radius: 4px; background: #d9d9d9; font-size: 10px; line-height: 15px; text-align: center; }
.pbtn.hot { margin-top: 13px; background: #bfe3f8; border-color: #6b93aa; }
.cursor { position: absolute; left: 49px; top: 244px; width: 16px; height: 20px; }
```
